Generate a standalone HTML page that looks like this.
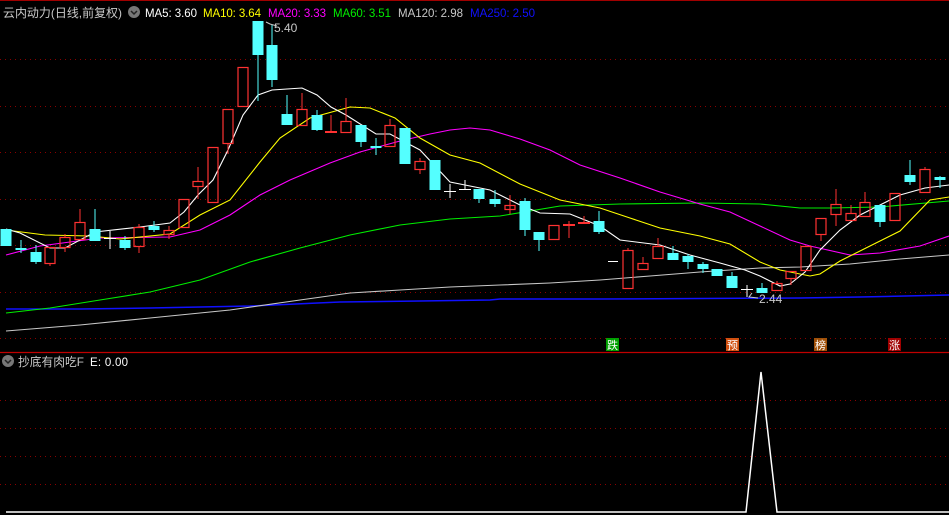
<!DOCTYPE html>
<html><head><meta charset="utf-8"><style>
html,body{margin:0;padding:0;background:#000;width:949px;height:515px;overflow:hidden}
svg{display:block}
text{font-family:"Liberation Sans","Noto Sans CJK SC",sans-serif}
</style></head><body>
<svg width="949" height="515" viewBox="0 0 949 515" xmlns="http://www.w3.org/2000/svg">
<rect width="949" height="515" fill="#000"/>
<line x1="0" y1="0.5" x2="949" y2="0.5" stroke="#a00000"/>
<g stroke="#8a0000" stroke-dasharray="1,4">
<line x1="0" y1="59.5" x2="949" y2="59.5"/><line x1="0" y1="106.5" x2="949" y2="106.5"/>
<line x1="0" y1="152.5" x2="949" y2="152.5"/><line x1="0" y1="199.5" x2="949" y2="199.5"/>
<line x1="0" y1="245.5" x2="949" y2="245.5"/><line x1="0" y1="292.5" x2="949" y2="292.5"/>
<line x1="0" y1="338.5" x2="949" y2="338.5"/>
<line x1="0" y1="400.5" x2="949" y2="400.5"/><line x1="0" y1="428.5" x2="949" y2="428.5"/>
<line x1="0" y1="456.5" x2="949" y2="456.5"/><line x1="0" y1="484.5" x2="949" y2="484.5"/>
</g>
<line x1="0" y1="352.5" x2="949" y2="352.5" stroke="#c00000" stroke-width="1.2"/>

<g fill="none" stroke-width="1.1">
<polyline stroke="#1010ff" stroke-width="1.5" points="6,309 80,309 150,308 250,306 340,302 420,301 490,300 500,299 600,299 800,298 860,297 949,295"/>
<polyline stroke="#c8c8c8" points="6,331 80,325 150,318 230,310 300,300 350,293 400,290 450,287 500,285 550,283 600,280 650,276 700,272 760,268 800,267 850,264 900,259 949,255"/>
<polyline stroke="#00ee00" points="6,313 50,308 100,300 150,292 200,280 250,262 300,248 350,235 400,225 450,219 500,216 560,206 620,204 700,203 760,204 800,208 830,208 880,207 949,201"/>
<polyline stroke="#ff00ff" points="6,255 40,246 100,238 170,237 200,230 230,215 260,195 290,180 330,163 360,152 400,141 430,134 450,130 470,128 490,130 520,139 550,150 580,165 620,178 660,192 700,204 730,212 760,226 790,240 810,246 850,255 880,253 920,246 949,236"/>
<polyline stroke="#ffff00" points="6,230 45,235 90,236 120,239 170,234 200,215 230,200 260,162 280,138 310,118 350,107 370,108 395,118 420,138 450,155 480,163 520,184 560,200 600,208 630,218 660,228 700,236 730,244 760,262 780,270 810,276 820,274 840,261 870,246 900,231 930,200 949,197"/>
<polyline stroke="#ffffff" points="6,229 20,233 50,248 65,248 95,232 140,227 170,223 184,212 198,195 213,180 228,150 243,115 258,95 272,90 302,88 317,95 331,107 346,115 376,134 390,134 420,150 450,182 470,186 490,190 520,205 540,213 570,214 600,226 620,240 660,245 690,255 720,263 745,270 760,276 780,286 790,284 805,272 820,250 840,230 860,215 880,205 900,195 925,188 949,185"/>
</g>

<g stroke-width="1">
<g stroke="#54ffff">
<line x1="21" y1="240" x2="21" y2="253"/><line x1="36" y1="245" x2="36" y2="264"/>
<line x1="95" y1="209" x2="95" y2="241"/><line x1="125" y1="236" x2="125" y2="250"/>
<line x1="154" y1="221" x2="154" y2="232"/><line x1="258" y1="55" x2="258" y2="101"/>
<line x1="272" y1="25" x2="272" y2="87"/><line x1="287" y1="95" x2="287" y2="114"/>
<line x1="317" y1="110" x2="317" y2="131"/><line x1="361" y1="142" x2="361" y2="147"/>
<line x1="376" y1="138" x2="376" y2="155"/><line x1="479" y1="199" x2="479" y2="203"/>
<line x1="495" y1="190" x2="495" y2="207"/><line x1="525" y1="198" x2="525" y2="236"/>
<line x1="539" y1="240" x2="539" y2="251"/><line x1="599" y1="211" x2="599" y2="234"/>
<line x1="673" y1="246" x2="673" y2="253"/><line x1="688" y1="254" x2="688" y2="269"/>
<line x1="703" y1="262" x2="703" y2="273"/><line x1="732" y1="272" x2="732" y2="276"/>
<line x1="762" y1="283" x2="762" y2="288"/><line x1="880" y1="222" x2="880" y2="227"/>
<line x1="910" y1="160" x2="910" y2="185"/><line x1="940" y1="176" x2="940" y2="188"/>
</g>
<g stroke="#ff3232">
<line x1="50" y1="263" x2="50" y2="266"/><line x1="65" y1="234" x2="65" y2="237"/><line x1="65" y1="247" x2="65" y2="252"/>
<line x1="80" y1="209" x2="80" y2="222"/><line x1="139" y1="224" x2="139" y2="227"/><line x1="139" y1="246" x2="139" y2="253"/>
<line x1="169" y1="226" x2="169" y2="230"/><line x1="169" y1="234" x2="169" y2="239"/>
<line x1="198" y1="167" x2="198" y2="181"/><line x1="198" y1="186" x2="198" y2="199"/>
<line x1="228" y1="143" x2="228" y2="154"/><line x1="302" y1="93" x2="302" y2="109"/>
<line x1="331" y1="115" x2="331" y2="132"/><line x1="346" y1="98" x2="346" y2="121"/>
<line x1="390" y1="119" x2="390" y2="125"/><line x1="420" y1="158" x2="420" y2="161"/><line x1="420" y1="169" x2="420" y2="174"/>
<line x1="510" y1="195" x2="510" y2="214"/><line x1="569" y1="221" x2="569" y2="238"/>
<line x1="584" y1="216" x2="584" y2="223"/><line x1="628" y1="248" x2="628" y2="250"/>
<line x1="643" y1="257" x2="643" y2="263"/><line x1="658" y1="238" x2="658" y2="246"/>
<line x1="777" y1="281" x2="777" y2="283"/><line x1="791" y1="278" x2="791" y2="285"/>
<line x1="821" y1="234" x2="821" y2="241"/><line x1="836" y1="189" x2="836" y2="204"/><line x1="836" y1="214" x2="836" y2="226"/>
<line x1="851" y1="205" x2="851" y2="213"/><line x1="865" y1="192" x2="865" y2="202"/>
<line x1="925" y1="167" x2="925" y2="169"/>
</g>
<g stroke="#ffffff">
<line x1="110" y1="231" x2="110" y2="249"/><line x1="104" y1="238.5" x2="116" y2="238.5"/>
<line x1="450" y1="184" x2="450" y2="198"/><line x1="444" y1="191.5" x2="456" y2="191.5"/>
<line x1="465" y1="180" x2="465" y2="190"/><line x1="459" y1="189.5" x2="471" y2="189.5"/>
<line x1="608" y1="261.5" x2="618" y2="261.5"/>
<line x1="747" y1="285" x2="747" y2="297"/><line x1="741" y1="289.5" x2="753" y2="289.5"/>
</g>
</g>

<g fill="#54ffff">
<rect x="0.5" y="229" width="11" height="17"/><rect x="15.5" y="248" width="11" height="2"/>
<rect x="30.5" y="252" width="11" height="10"/><rect x="89.5" y="229" width="11" height="12"/>
<rect x="119.5" y="240" width="11" height="8"/><rect x="148.5" y="226" width="11" height="4"/>
<rect x="252.5" y="21" width="11" height="34"/><rect x="266.5" y="45" width="11" height="35"/>
<rect x="281.5" y="114" width="11" height="11"/><rect x="311.5" y="115" width="11" height="15"/>
<rect x="355.5" y="125" width="11" height="17"/><rect x="370.5" y="146" width="11" height="2"/>
<rect x="399.5" y="128" width="11" height="36"/><rect x="429.5" y="160" width="11" height="30"/>
<rect x="473.5" y="189" width="11" height="10"/><rect x="489.5" y="199" width="11" height="5"/>
<rect x="519.5" y="201" width="11" height="29"/><rect x="533.5" y="232" width="11" height="8"/>
<rect x="593.5" y="221" width="11" height="11"/><rect x="667.5" y="253" width="11" height="7"/>
<rect x="682.5" y="256" width="11" height="6"/><rect x="697.5" y="264" width="11" height="5"/>
<rect x="711.5" y="269" width="11" height="7"/><rect x="726.5" y="276" width="11" height="12"/>
<rect x="756.5" y="288" width="11" height="5"/><rect x="874.5" y="205" width="11" height="17"/>
<rect x="904.5" y="175" width="11" height="7"/><rect x="934.5" y="177" width="11" height="3"/>
</g>
<g fill="none" stroke="#ff3232" stroke-width="1.2">
<rect x="45" y="247.5" width="10" height="16"/><rect x="60" y="237.5" width="10" height="10"/>
<rect x="75" y="222.5" width="10" height="17"/><rect x="134" y="227.5" width="10" height="19"/>
<rect x="164" y="230.5" width="10" height="4"/><rect x="179" y="199.5" width="10" height="28"/>
<rect x="193" y="181.5" width="10" height="5"/><rect x="208" y="147.5" width="10" height="55"/>
<rect x="223" y="109.5" width="10" height="34"/><rect x="238" y="67.5" width="10" height="39"/>
<rect x="297" y="109.5" width="10" height="16"/><rect x="341" y="121.5" width="10" height="11"/>
<rect x="385" y="125.5" width="10" height="21"/><rect x="415" y="161.5" width="10" height="8"/>
<rect x="505" y="205.5" width="10" height="4"/><rect x="549" y="225.5" width="10" height="14"/>
<rect x="623" y="250.5" width="10" height="38"/><rect x="638" y="263.5" width="10" height="6"/>
<rect x="653" y="246.5" width="10" height="12"/><rect x="772" y="283.5" width="10" height="7"/>
<rect x="786" y="271.5" width="10" height="7"/><rect x="801" y="246.5" width="10" height="24"/>
<rect x="816" y="218.5" width="10" height="16"/><rect x="831" y="204.5" width="10" height="10"/>
<rect x="846" y="213.5" width="10" height="7"/><rect x="860" y="202.5" width="10" height="14"/>
<rect x="890" y="193.5" width="10" height="27"/><rect x="920" y="169.5" width="10" height="23"/>
</g>
<g fill="#ff3232">
<rect x="325" y="131" width="12" height="2"/>
<rect x="563" y="224" width="12" height="2"/>
<rect x="578" y="222" width="12" height="2"/>
</g>

<g fill="#c8c8c8" font-size="12">
<polyline points="266,22 270,24 277,26" fill="none" stroke="#c8c8c8"/>
<text x="274" y="32">5.40</text>
<polyline points="752,293 749,297 758,298" fill="none" stroke="#c8c8c8"/>
<text x="759" y="303">2.44</text>
</g>

<g font-size="11" fill="#fff" text-anchor="middle">
<rect x="606" y="338" width="13" height="13" fill="#00a000"/><text x="612.5" y="349">跌</text>
<rect x="726" y="338" width="13" height="13" fill="#d05010"/><text x="732.5" y="349">预</text>
<rect x="814" y="338" width="13" height="13" fill="#a05008"/><text x="820.5" y="349">榜</text>
<rect x="888" y="338" width="13" height="13" fill="#a00000"/><text x="894.5" y="349">涨</text>
</g>

<g font-size="11.5">
<text x="3" y="17" fill="#c8c8c8" font-size="12" textLength="119" lengthAdjust="spacingAndGlyphs">云内动力(日线,前复权)</text>
<circle cx="134" cy="12" r="6" fill="#777"/><polyline points="131,11 134,14 137,11" fill="none" stroke="#222" stroke-width="1.5"/>
<text x="145" y="17" fill="#fff" textLength="52">MA5: 3.60</text>
<text x="203" y="17" fill="#ffff00" textLength="58">MA10: 3.64</text>
<text x="268" y="17" fill="#ff00ff" textLength="58">MA20: 3.33</text>
<text x="333" y="17" fill="#00ee00" textLength="58">MA60: 3.51</text>
<text x="398" y="17" fill="#c8c8c8" textLength="65">MA120: 2.98</text>
<text x="470" y="17" fill="#1010ff" textLength="65">MA250: 2.50</text>
</g>
<g font-size="12">
<circle cx="8" cy="361" r="6" fill="#777"/><polyline points="5,360 8,363 11,360" fill="none" stroke="#222" stroke-width="1.5"/>
<text x="18" y="366" fill="#c8c8c8" textLength="66" lengthAdjust="spacingAndGlyphs">抄底有肉吃F</text>
<text x="90" y="366" fill="#fff" font-size="11.5" textLength="38">E: 0.00</text>
</g>

<polyline points="6,512 746,512 761,372 777,512 949,512" fill="none" stroke="#fff" stroke-width="1.5"/>
</svg>
</body></html>
